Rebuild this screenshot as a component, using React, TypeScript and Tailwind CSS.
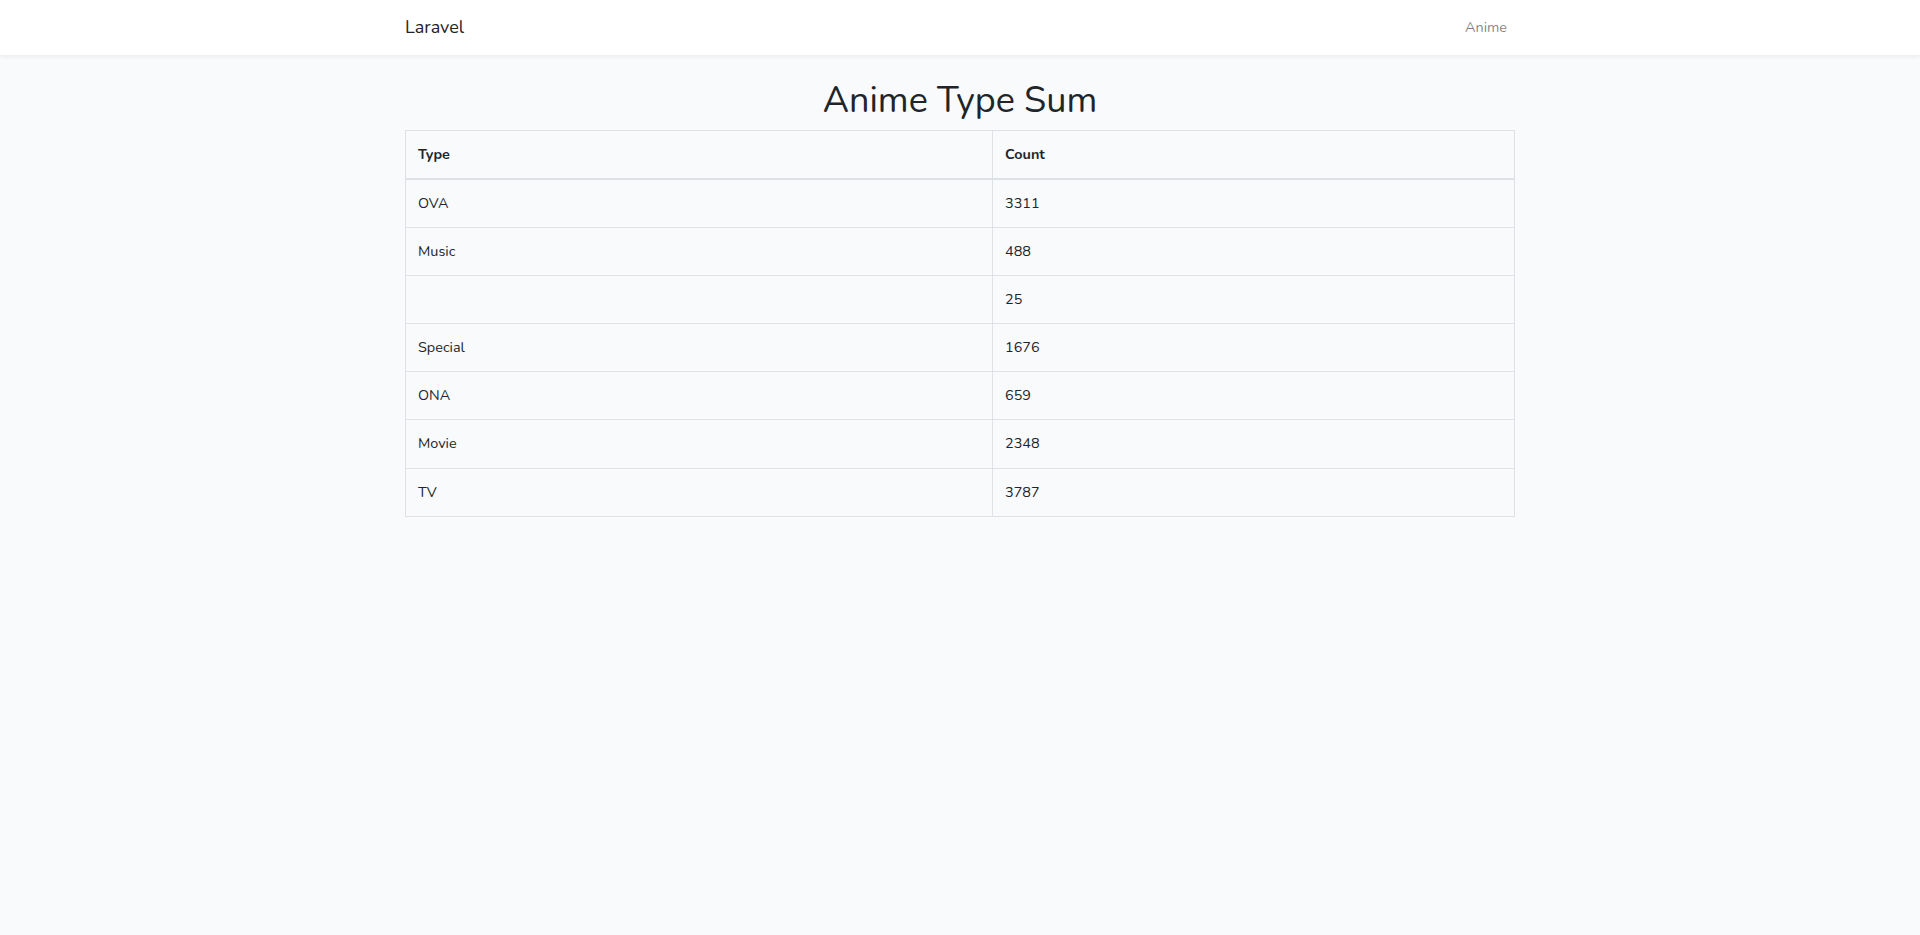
import React from 'react';

const rows: { type: string; count: number }[] = [
  { type: 'OVA', count: 3311 },
  { type: 'Music', count: 488 },
  { type: '', count: 25 },
  { type: 'Special', count: 1676 },
  { type: 'ONA', count: 659 },
  { type: 'Movie', count: 2348 },
  { type: 'TV', count: 3787 },
];

export default function App() {
  return (
    <div className="min-h-[935px] bg-[#f8fafc] text-[#212529] font-['Nunito','Lato',sans-serif] text-[14.4px] leading-[1.6]">
      {/* Navbar */}
      <nav className="bg-white shadow-[0_2px_4px_rgba(0,0,0,0.06)] h-[55px]">
        <div className="w-[1110px] mx-auto h-full flex items-center justify-between">
          <span className="text-[18px] text-[#212529]">Laravel</span>
          <span className="px-2 text-[rgba(0,0,0,0.5)]">Anime</span>
        </div>
      </nav>

      {/* Content */}
      <main className="py-6">
        <div className="w-[1110px] mx-auto">
          <h1 className="text-center text-[36px] leading-[1.2] font-normal mb-2">Anime Type Sum</h1>
          <table className="w-full border-collapse border border-[#dee2e6]">
            <thead>
              <tr>
                <th className="w-[587px] text-left font-bold px-3 py-3 border border-[#dee2e6] border-b-2">Type</th>
                <th className="text-left font-bold px-3 py-3 border border-[#dee2e6] border-b-2">Count</th>
              </tr>
            </thead>
            <tbody>
              {rows.map((r, i) => (
                <tr key={i}>
                  <td className="h-[48px] px-3 py-3 border border-[#dee2e6]">{r.type}</td>
                  <td className="h-[48px] px-3 py-3 border border-[#dee2e6]">{r.count}</td>
                </tr>
              ))}
            </tbody>
          </table>
        </div>
      </main>
    </div>
  );
}
